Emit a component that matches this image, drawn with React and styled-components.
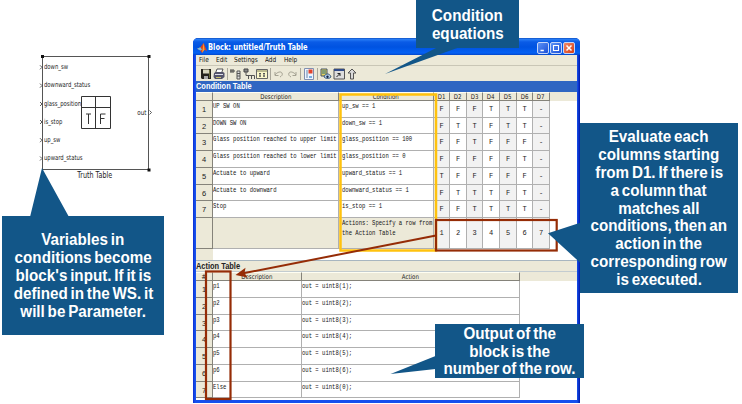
import React from "react";
import styled, { createGlobalStyle, css } from "styled-components";

const GlobalStyle = createGlobalStyle`
  *, *::before, *::after { box-sizing: border-box; }
  body { margin: 0; background: #fff; overflow: hidden; }
`;

const BLUE = "#125688";
const BEIGE = "#ece9d8";
const BROWN = "#952c06";
const GRID = "#b0b0b0";

const Stage = styled.main`
  position: relative;
  width: 742px;
  height: 404px;
  overflow: hidden;
  background: #fff;
  font-family: "Liberation Sans", sans-serif;
`;

/* ---------- Simulink block ---------- */
const Block = styled.section`
  position: absolute;
  left: 42px;
  top: 56px;
  width: 107px;
  height: 114px;
  border: 1px solid #555;
  display: flex;
  justify-content: space-between;
  font: 7px/8px "DejaVu Sans", sans-serif;
  color: #222;
`;
const Inputs = styled.div`
  display: flex;
  flex-direction: column;
  padding: 6px 0 0 1px;
  gap: 10.3px;
`;
const Port = styled.div`
  height: 8px;
  width: ${(p) => p.$w}px;
  white-space: nowrap;
`;
const Squeeze = styled.span`
  display: inline-block;
  white-space: nowrap;
  transform: scaleX(${(p) => p.$x || 1});
  transform-origin: ${(p) => p.$origin || "left"} center;
`;
const Output = styled.div`
  padding: 52px 2px 0 0;
`;
const BlockArt = styled.svg`
  position: absolute;
  left: 36px;
  top: 50px;
`;
const BlockName = styled.div`
  position: absolute;
  left: 55px;
  top: 170px;
  width: 80px;
  text-align: center;
  color: #222;
  font: 8px/11px "DejaVu Sans", sans-serif;
`;

/* ---------- Window ---------- */
const Window = styled.section`
  position: absolute;
  left: 193px;
  top: 38px;
  width: 387px;
  height: 365px;
  padding: 0 3px 3px;
  display: flex;
  flex-direction: column;
  background: linear-gradient(90deg, #0a2ccf 0, #1650ee 2px, #1650ee 384px, #0018a8 387px);
  border-radius: 5px 5px 0 0;
  overflow: hidden;
`;
const TitleBar = styled.header`
  flex: 0 0 17px;
  margin: 0 -3px;
  padding: 2px 5px 0 4px;
  display: flex;
  align-items: center;
  background: linear-gradient(#0640b0 0, #2a80f8 1px, #0a5be6 4px, #0053e1 9px, #0461f4 15px, #0346c8 17px);
  color: #fff;
`;
const Title = styled.div`
  flex: 1;
  margin-left: 1px;
  font: bold 8px/12px "DejaVu Sans", sans-serif;
  white-space: nowrap;
`;
const WinButtons = styled.div`
  display: flex;
  gap: 1px;
`;
const WinButton = styled.span`
  width: 12px;
  height: 12px;
  border: 1px solid #c5d6f8;
  border-radius: 2px;
  background: ${(p) => (p.$close ? "linear-gradient(135deg,#f08a6a,#d63c12)" : "linear-gradient(135deg,#5c92f5,#1b50d8)")};
  svg { display: block; }
`;
const MenuBar = styled.nav`
  flex: 0 0 11px;
  display: grid;
  grid-template-columns: 17px 18px 31px 18.5px 20px;
  padding-left: 3px;
  background: ${BEIGE};
  border-bottom: 1px solid #c9c6b6;
  font: 7px/10px "DejaVu Sans", sans-serif;
  color: #111;
`;
const Toolbar = styled.div`
  flex: 0 0 15px;
  display: flex;
  align-items: center;
  padding-left: 1px;
  background: ${BEIGE};
`;
const Tool = styled.span`
  width: 12px;
  height: 12px;
  margin-left: ${(p) => p.$gap || 1}px;
  svg { display: block; }
`;
const Divider = styled.i`
  width: 1px;
  height: 12px;
  margin-left: ${(p) => p.$gap || 2}px;
  background: #aaa79a;
`;
const PaneTitle = styled.h2`
  flex: 0 0 11px;
  margin: 0;
  font: bold 8.5px/11px "Liberation Sans", sans-serif;
  white-space: nowrap;
  color: ${(p) => (p.$active ? "#fff" : "#222")};
  background: ${(p) => (p.$active ? "#2f66c2" : BEIGE)};
  ${(p) => !p.$active && css`
    flex-basis: 12px;
    line-height: 10px;
    border-top: 1px solid #a8b6c0;
    border-bottom: 1px solid #c3ccd0;
  `}
`;
const Pane = styled.div`
  flex: 0 0 ${(p) => p.$h}px;
  display: flex;
  flex-direction: column;
  background: #fff;
  overflow: hidden;
`;
const conditionCols = "17px 126px 95px 16px 17px 16px 17px 17px 16px 17px";
const actionCols = "17px 89px 218px";
const Row = styled.div`
  display: grid;
  flex: 0 0 ${(p) => p.$h}px;
  height: ${(p) => p.$h}px;
  grid-template-columns: ${(p) => (p.$action ? actionCols : conditionCols)};
  background: ${(p) => (p.$head ? BEIGE : "transparent")};
`;
const cell = css`
  border-right: 1px solid ${GRID};
  border-bottom: 1px solid ${GRID};
  overflow: hidden;
  white-space: nowrap;
`;
const HeadCell = styled.div`
  ${cell}
  border-color: #85837a;
  border-top: 1px solid #fffef2;
  font: 6.6px/8px "DejaVu Sans", sans-serif;
  text-align: center;
  color: #222;
`;
const NumCell = styled.div`
  ${cell}
  border-color: #85837a;
  background: ${BEIGE};
  font: 7.5px/${(p) => (p.$low ? 17 : 16)}px "Liberation Sans", sans-serif;
  text-align: center;
  color: #222;
`;
const TextCell = styled.div`
  ${cell}
  padding-left: ${(p) => p.$indent || 0}px;
  font: 7px/10px "Liberation Mono", monospace;
  color: #151515;
  background: ${(p) => (p.$shade ? BEIGE : "#fff")};
`;
const Value = styled.div`
  ${cell}
  display: flex;
  align-items: center;
  justify-content: center;
  font: 7px/10px "Liberation Mono", monospace;
  color: #222;
  background: ${(p) => (p.$odd ? "#f2f2f2" : "#fff")};
`;
const GutterEnd = styled.div`
  width: 17px;
  flex: 1;
  background: ${BEIGE};
`;

/* ---------- Annotations ---------- */
const Overlay = styled.svg`
  position: absolute;
  left: 0;
  top: 0;
`;
const Callout = styled.aside`
  position: absolute;
  left: ${(p) => p.$x}px;
  top: ${(p) => p.$y}px;
  width: ${(p) => p.$w}px;
  height: ${(p) => p.$h}px;
  display: flex;
  flex-direction: column;
  align-items: center;
  justify-content: center;
  background: ${BLUE};
  color: #fff;
  padding-top: 1px;
  font: bold 16px/17.95px "Liberation Sans", sans-serif;
  word-spacing: -1.5px;
  white-space: nowrap;
`;

const Icon = ({ children, size = 12 }) => (
  <svg width={size} height={size} viewBox="0 0 12 12" fill="none">{children}</svg>
);

const icons = {
  save: <><path d="M1 1h10v10H2l-1-1z" fill="#25231c" /><path d="M3 1.500h6v4H3z" fill="#d8d6bd" /><path d="M4 8h4v3H4z" fill="#aaa" /><path d="M9.500 2v8" stroke="#68683a" /></>,
  print: <><path d="M4 1h6L8.500 5H2.500z" fill="#fff" stroke="#555" /><path d="M1 5l2-1h7l1.500 1v4L9 11H2L.5 9z" fill="#55556c" /><path d="M2 6.500h8" stroke="#dedeea" /><path d="M3 9.500h5" stroke="#c9c16a" /></>,
  row: <><path d="M1 1v4M3 1v4M0 3h5" stroke="#444" /><path d="M7 3h3v8H7zM7 5.500h3M7 8h3" stroke="#555" fill="#ddd" /></>,
  col: <><path d="M1 1h4v3H1z" stroke="#444" fill="#888" /><path d="M3 4v3.500h2.500M5.500 7v4M8.500 7.500v3.500M11.500 7.500v3.500M5.500 7.500h6" stroke="#555" /></>,
  grid: <><path d="M.5 1.500h11v9H.5z" fill="#fbf7c9" stroke="#666" /><path d="M1 3h10" stroke="#7a7a55" /><path d="M3 5.500h2M7 5.500h2M4 5v4M8 5v4M3 8h2M7 8h2" stroke="#555" /></>,
  undo: <path d="M2 4v3.500h3.500M2 7C4 4 8 3 9 5s-.5 3-2 4" stroke="#a5a293" />,
  redo: <path d="M10 4v3.500H6.500M10 7C8 4 4 3 3 5s.5 3 2 4" stroke="#a5a293" />,
  check: <><path d="M1.500.5h9v11h-9z" fill="#eef4ff" stroke="#8290b0" /><path d="M5.500 1.500h4v4h-4z" fill="#e2432b" /><path d="M3 3h2M3 5h2M3 7h2M3 9h2" stroke="#68a" /><path d="M6 8h3v2H6z" fill="#79aee0" /></>,
  debug: <><path d="M1 1h6v7H1z" fill="#e5d35c" stroke="#456" /><path d="M2 3h4M2 5h4" stroke="#268" /><path d="M4 9c1-4 6-4 7 0-2 2-5 2-7 0z" fill="#bdd5ee" stroke="#357" /><circle cx="7.500" cy="8.800" r="1.200" fill="#124" /></>,
  model: <><path d="M1 1h10.500v10H1z" fill="#ddd" stroke="#555" /><path d="M1 2h10" stroke="#304a88" strokeWidth="2" /><path d="M3.500 9L7 5.500M4.500 5.500H7V8" stroke="#222" /></>,
  up: <path d="M6 1l4 4H7.500v6h-3V5H2z" fill="#d9d9d9" stroke="#555" />,
};

const conditions = [
  ["UP SW ON", "up_sw == 1", "FFFTTT-"],
  ["DOWN SW ON", "down_sw == 1", "FTTFTT-"],
  ["Glass position reached to upper limit", "glass_position == 100", "FFTFFF-"],
  ["Glass position reached to lower limit", "glass_position == 0", "FFFFFT-"],
  ["Actuate to upward", "upward_status == 1", "TFFFFF-"],
  ["Actuate to downward", "downward_status == 1", "FTTTFT-"],
  ["Stop", "is_stop == 1", "FFTTTT-"],
];
const conditionHeights = [17, 16, 17, 17, 17, 16, 17];
const actions = [["p1", 1], ["p2", 2], ["p3", 3], ["p4", 4], ["p5", 5], ["p6", 6], ["Else", 0]];
const actionHeights = [17, 17, 16, 17, 17, 17, 16];
const ports = ["down_sw", "downward_status", "glass_position", "is_stop", "up_sw", "upward_status"];

const Mono = ({ children }) => <Squeeze $x={0.796}>{children}</Squeeze>;

function SimulinkBlock() {
  return (
    <>
      <Block>
        <Inputs>
          {ports.map((name) => (
            <Port key={name} $w={50}><Squeeze $x={0.755}>{name}</Squeeze></Port>
          ))}
        </Inputs>
        <Output><Squeeze $x={0.8} $origin="right">out</Squeeze></Output>
      </Block>
      <BlockArt width="120" height="126" viewBox="36 50 120 126" fill="none" stroke="#333">
        {[67.3, 85.6, 104, 122, 140.200, 158.500].map((y) => (
          <path key={y} d={`M40 ${y - 2}l2 2-2 2`} strokeWidth=".8" />
        ))}
        <path d="M149.500 110.500l2 2-2 2" strokeWidth=".8" />
        <path d="M81.500 96.500h29v32h-29zM95.500 96.500v32M81.500 107.500h29" />
        <path d="M86 114h5M88.500 114v10M100.500 124v-10h5M100.500 118.500h4" />
        <path d="M41 55h3v3h-3zM147.500 55h3v3h-3zM147.500 168.500h3v3h-3z" fill="#111" stroke="none" />
      </BlockArt>
      <BlockName><Squeeze $x={0.8} $origin="center">Truth Table</Squeeze></BlockName>
    </>
  );
}

function ConditionPane() {
  return (
    <Pane $h={168}>
      <Row $h={9} $head>
        <HeadCell />
        <HeadCell><Squeeze $x={0.83} $origin="center">Description</Squeeze></HeadCell>
        <HeadCell><Squeeze $x={0.83} $origin="center">Condition</Squeeze></HeadCell>
        {[1, 2, 3, 4, 5, 6, 7].map((n) => (
          <HeadCell key={n}><Squeeze $x={0.83} $origin="center">D{n}</Squeeze></HeadCell>
        ))}
      </Row>
      {conditions.map(([description, condition, values], i) => (
        <Row key={description} $h={conditionHeights[i]}>
          <NumCell $low>{i + 1}</NumCell>
          <TextCell><Mono>{description}</Mono></TextCell>
          <TextCell $indent={2.5}><Mono>{condition}</Mono></TextCell>
          {[...values].map((v, k) => <Value key={k} $odd={k % 2 === 0}>{v}</Value>)}
        </Row>
      ))}
      <Row $h={31}>
        <NumCell />
        <TextCell $shade />
        <TextCell $shade $indent={2.5}>
          <Mono>Actions: Specify a row from<br />the Action Table</Mono>
        </TextCell>
        {[1, 2, 3, 4, 5, 6, 7].map((n) => <Value key={n} $odd={n % 2 === 1}>{n}</Value>)}
      </Row>
      <GutterEnd />
    </Pane>
  );
}

function ActionPane() {
  return (
    <Pane $h={128}>
      <Row $h={9} $head $action>
        <HeadCell>#</HeadCell>
        <HeadCell><Squeeze $x={0.83} $origin="center">Description</Squeeze></HeadCell>
        <HeadCell><Squeeze $x={0.83} $origin="center">Action</Squeeze></HeadCell>
      </Row>
      {actions.map(([name, out], i) => (
        <Row key={name} $h={actionHeights[i]} $action>
          <NumCell $low>{i + 1}</NumCell>
          <TextCell><Mono>{name}</Mono></TextCell>
          <TextCell><Mono>out = uint8({out});</Mono></TextCell>
        </Row>
      ))}
    </Pane>
  );
}

function TruthTableWindow() {
  return (
    <Window>
      <TitleBar>
        <Icon size={10}>
          <path d="M0 7l4-2 4-5 4 10-3-2-3 4-2-3z" fill="#d9441e" />
          <path d="M0 7l4-2 2 3-2 1z" fill="#6fc0e6" />
          <path d="M8 0l1 8-3 4z" fill="#f3a43a" />
        </Icon>
        <Title><Squeeze $x={0.835}>Block: untitled/Truth Table</Squeeze></Title>
        <WinButtons>
          <WinButton><Icon size={10}><path d="M3 9h4" stroke="#fff" strokeWidth="2" /></Icon></WinButton>
          <WinButton><Icon size={10}><path d="M3 3h6v6H3z" stroke="#fff" strokeWidth="1.300" /></Icon></WinButton>
          <WinButton $close><Icon size={10}><path d="M3 3l6 6M9 3L3 9" stroke="#fff" strokeWidth="1.800" /></Icon></WinButton>
        </WinButtons>
      </TitleBar>
      <MenuBar>
        {["File", "Edit", "Settings", "Add", "Help"].map((m) => (
          <Squeeze key={m} $x={0.83}>{m}</Squeeze>
        ))}
      </MenuBar>
      <Toolbar>
        <Tool $gap={3}><Icon>{icons.save}</Icon></Tool>
        <Tool><Icon>{icons.print}</Icon></Tool>
        <Divider />
        <Tool $gap={2}><Icon>{icons.row}</Icon></Tool>
        <Tool><Icon>{icons.col}</Icon></Tool>
        <Tool><Icon>{icons.grid}</Icon></Tool>
        <Divider />
        <Tool $gap={2}><Icon>{icons.undo}</Icon></Tool>
        <Tool><Icon>{icons.redo}</Icon></Tool>
        <Divider />
        <Tool $gap={2}><Icon>{icons.check}</Icon></Tool>
        <Divider />
        <Tool $gap={2}><Icon>{icons.debug}</Icon></Tool>
        <Tool><Icon>{icons.model}</Icon></Tool>
        <Tool><Icon>{icons.up}</Icon></Tool>
      </Toolbar>
      <PaneTitle $active><Squeeze $x={0.875}>Condition Table</Squeeze></PaneTitle>
      <ConditionPane />
      <PaneTitle><Squeeze $x={0.875}>Action Table</Squeeze></PaneTitle>
      <ActionPane />
    </Window>
  );
}

const Lines = ({ of }) =>
  of.map((line) => <Squeeze key={line} $x={0.95} $origin="center">{line}</Squeeze>);

export default function App() {
  return (
    <Stage>
      <GlobalStyle />
      <SimulinkBlock />
      <TruthTableWindow />
      <Overlay width="742" height="404" viewBox="0 0 742 404" fill="none">
        <rect x="340.500" y="94.500" width="95.500" height="156" stroke="#ffc20e" strokeWidth="2.500" />
        <rect x="436" y="220" width="120.700" height="30.500" stroke={BROWN} strokeWidth="2.200" />
        <rect x="206" y="271.500" width="24.500" height="127.500" stroke={BROWN} strokeWidth="2.200" />
        <path d="M436 235.500L242 273.500" stroke={BROWN} strokeWidth="2" />
        <path d="M235.500 275l10-7.200-1 5.200 3 4.500z" fill={BROWN} />
        <path d="M42 168L30 217h39zM385 74l53-27h22zM548 233.300l33-10.800v41zM390.500 374l45-18v13z" fill={BLUE} />
      </Overlay>
      <Callout $x={416} $y={0} $w={103} $h={48}>
        <Lines of={["Condition", "equations"]} />
      </Callout>
      <Callout $x={2} $y={216} $w={162} $h={119}>
        <Lines of={["Variables in", "conditions become", "block's input. If it is", "defined in the WS. it", "will be Parameter."]} />
      </Callout>
      <Callout $x={580} $y={123} $w={158} $h={170}>
        <Lines of={["Evaluate each", "columns starting", "from D1. If there is", "a column that", "matches all", "conditions, then an", "action in the", "corresponding row", "is executed."]} />
      </Callout>
      <Callout $x={435} $y={324} $w={149} $h={54}>
        <Lines of={["Output of the", "block is the", "number of the row."]} />
      </Callout>
    </Stage>
  );
}
